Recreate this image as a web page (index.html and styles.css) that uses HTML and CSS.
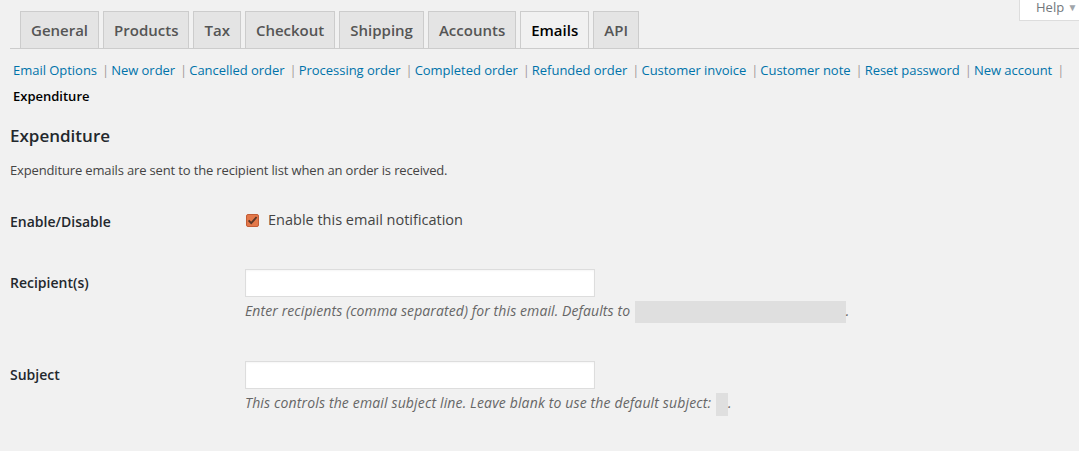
FILE: index.html
```html
<!DOCTYPE html>
<html>
<head>
<meta charset="utf-8">
<link rel="stylesheet" href="styles.css">
</head>
<body>
<div class="help-tab">Help <span class="tri">▼</span></div>
<div class="page">
  <nav class="tabs">
    <a class="tab">General</a>
    <a class="tab">Products</a>
    <a class="tab">Tax</a>
    <a class="tab">Checkout</a>
    <a class="tab">Shipping</a>
    <a class="tab">Accounts</a>
    <a class="tab active">Emails</a>
    <a class="tab">API</a>
  </nav>
  <div class="subsub">
    <ul class="links">
      <li><a>Email Options</a><span class="sep">|</span></li>
      <li><a>New order</a><span class="sep">|</span></li>
      <li><a>Cancelled order</a><span class="sep">|</span></li>
      <li><a>Processing order</a><span class="sep">|</span></li>
      <li><a>Completed order</a><span class="sep">|</span></li>
      <li><a>Refunded order</a><span class="sep">|</span></li>
      <li><a>Customer invoice</a><span class="sep">|</span></li>
      <li><a>Customer note</a><span class="sep">|</span></li>
      <li><a>Reset password</a><span class="sep">|</span></li>
      <li><a>New account</a><span class="sep">|</span></li>
    </ul>
    <div class="current">Expenditure</div>
  </div>
  <h3 class="title">Expenditure</h3>
  <p class="intro">Expenditure emails are sent to the recipient list when an order is received.</p>
  <div class="form">
    <div class="row row-check">
      <div class="th th-check">Enable/Disable</div>
      <div class="td">
        <label class="check">
          <svg class="cb" width="13" height="13" viewBox="0 0 13 13">
            <rect x="0.5" y="0.5" width="12" height="12" rx="1.5" fill="#e3784a" stroke="#c45d36"/>
            <path d="M2.6 6.4 L5.2 9.2 L10.6 3" fill="none" stroke="#5a3628" stroke-width="1.9"/>
          </svg>
          <span>Enable this email notification</span>
        </label>
      </div>
    </div>
    <div class="row">
      <div class="th">Recipient(s)</div>
      <div class="td">
        <div class="input"></div>
        <p class="desc">Enter recipients (comma separated) for this email. Defaults to <span class="mask mask-wide"></span>.</p>
      </div>
    </div>
    <div class="row">
      <div class="th">Subject</div>
      <div class="td">
        <div class="input"></div>
        <p class="desc desc-subject">This controls the email subject line. Leave blank to use the default subject: <span class="mask mask-small"></span>.</p>
      </div>
    </div>
  </div>
</div>
</body>
</html>
```
FILE: styles.css
```css
html, body {
  margin: 0;
  padding: 0;
  background: #f1f1f1;
  font-family: "Open Sans", "Noto Sans", sans-serif;
  color: #23282d;
  overflow: hidden;
}
.page {
  padding: 0 0 0 10px;
}
.help-tab {
  position: absolute;
  top: -5px;
  left: 1019px;
  width: 70px;
  height: 26px;
  box-sizing: border-box;
  background: #fff;
  border: 1px solid #ddd;
  border-top: none;
  font-size: 13px;
  line-height: 24px;
  color: #72777c;
  padding-left: 16px;
  white-space: nowrap;
}
.help-tab .tri {
  font-size: 10px;
  color: #a0a5aa;
  margin-left: 0;
  position: relative;
  top: -1px;
}
.tabs {
  display: flex;
  gap: 4px;
  padding: 11px 0 0 10px;
  border-bottom: 1px solid #ccc;
}
.tab {
  display: block;
  border: 1px solid #ccc;
  border-bottom: none;
  background: #e4e4e4;
  color: #555;
  font-size: 15px;
  font-weight: 600;
  line-height: 24px;
  padding: 6px 10px;
}
.tab.active {
  background: #f1f1f1;
  color: #000;
}
.subsub {
  margin: 8px 0 0 3px;
  font-size: 13px;
  line-height: 26px;
}
.links {
  list-style: none;
  margin: 0;
  padding: 0;
  display: flex;
  flex-wrap: nowrap;
  white-space: nowrap;
  letter-spacing: -0.03px;
}
.links a {
  color: #0073aa;
}
.links .sep {
  color: #a39a9a;
  margin: 0 2px 0 5px;
}
.current {
  font-weight: 600;
  color: #000;
}
.title {
  margin: 16px 0 0;
  font-size: 17px;
  font-weight: 600;
  line-height: 22px;
  color: #23282d;
}
.intro {
  margin: 13px 0 0;
  font-size: 13px;
  line-height: 20px;
  color: #444;
  letter-spacing: -0.15px;
}
.form {
  margin-top: 10px;
}
.row {
  display: grid;
  grid-template-columns: 235px 1fr;
  padding: 20px 0 18px;
}
.row-check {
  padding: 20px 0 17px;
}
.th {
  font-size: 14px;
  font-weight: 600;
  line-height: 28px;
  color: #23282d;
}
.th-check {
  line-height: 20px;
  padding-top: 2px;
}
.check {
  display: flex;
  align-items: center;
  gap: 9px;
  font-size: 14.5px;
  line-height: 20px;
  color: #444;
}
.cb {
  display: block;
  margin-left: 1px;
}
.input {
  width: 350px;
  height: 28px;
  box-sizing: border-box;
  background: #fff;
  border: 1px solid #ddd;
  box-shadow: inset 0 1px 2px rgba(0,0,0,0.04);
}
.desc {
  margin: 4px 0 0;
  font-size: 14px;
  line-height: 20px;
  font-style: italic;
  color: #666;
  letter-spacing: 0.1px;
}
.desc-subject {
  letter-spacing: 0.15px;
}
.mask {
  display: inline-block;
  background: #dfdfdf;
  vertical-align: middle;
  margin-left: 1px;
}
.mask-wide {
  width: 211px;
  height: 22px;
}
.mask-small {
  width: 12px;
  height: 23px;
}
```
